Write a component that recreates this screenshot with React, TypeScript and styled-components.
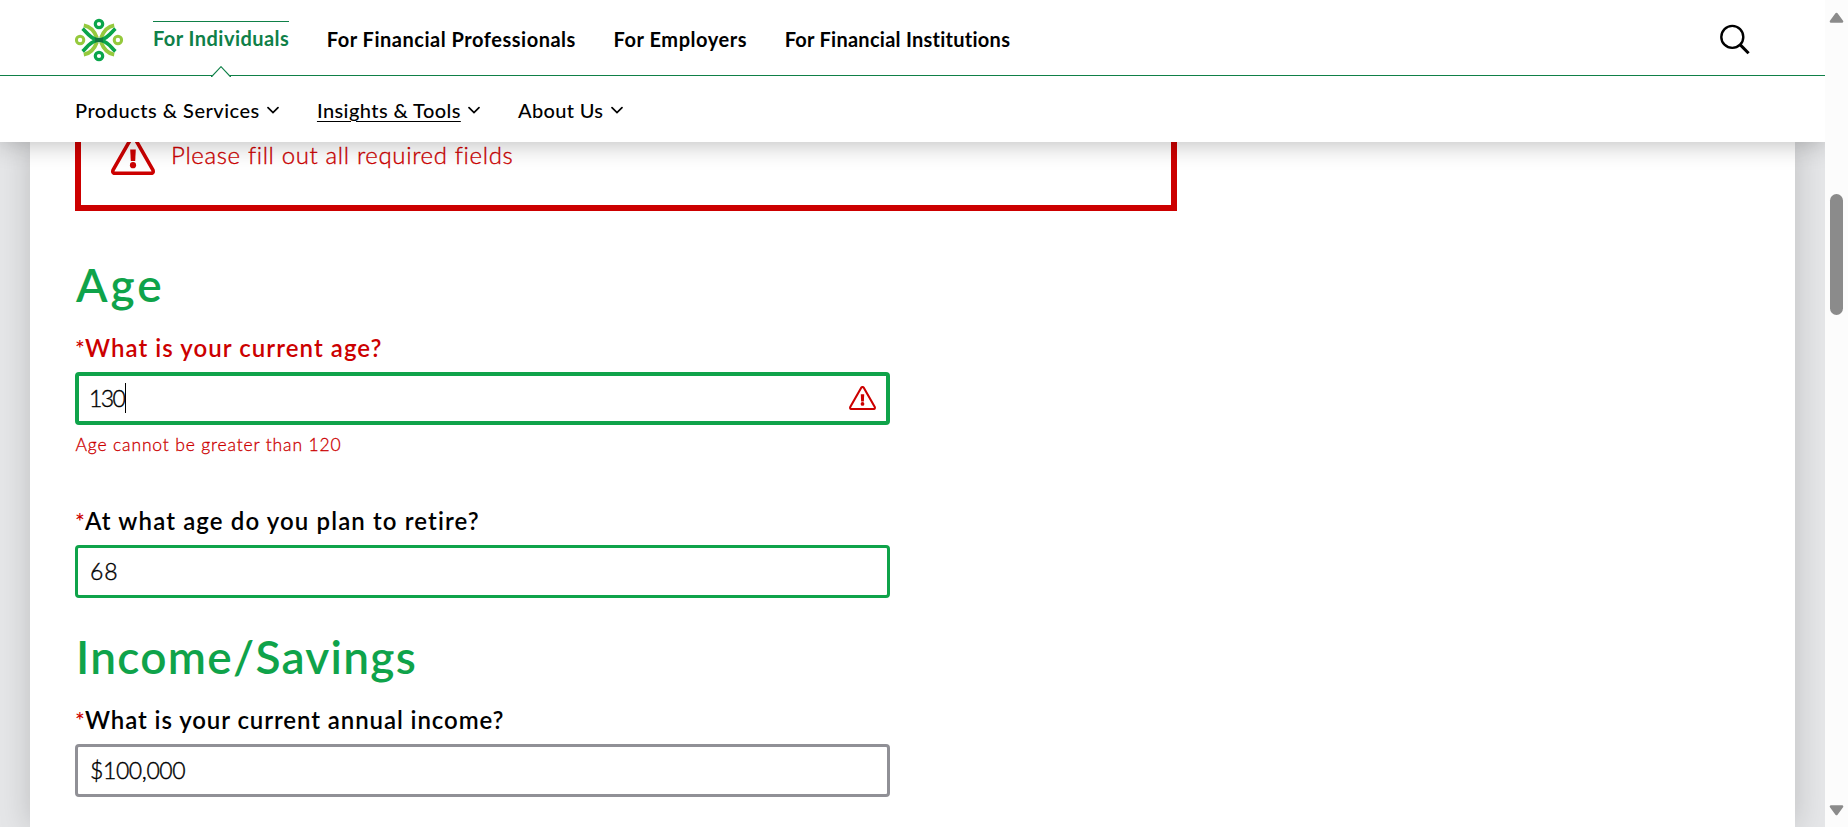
import React from "react";
import styled, { createGlobalStyle, css } from "styled-components";

const RED = "#cc0000";
const GREEN = "#0fa34a";
const DEEP_GREEN = "#0f8048";

const GlobalStyle = createGlobalStyle`
  * { box-sizing: border-box; }
  body {
    margin: 0;
    background: #fff;
    color: #000;
    font-family: Lato, "Open Sans", sans-serif;
  }
`;

const Page = styled.div`
  display: flex;
  height: 827px;
  overflow: hidden;
`;

const Viewport = styled.div`
  flex: 1;
  min-width: 0;
  display: flex;
  flex-direction: column;
  overflow: hidden;
`;

/* ---------- header ---------- */

const Header = styled.header`
  position: relative;
  z-index: 2;
  flex: none;
  height: 142px;
  background: #fff;
  box-shadow: 0 0 25px rgba(0, 0, 0, 0.3);
`;

const TopBar = styled.div`
  display: flex;
  align-items: flex-start;
  height: 76px;
  padding: 18px 74px 0 75px;
  border-bottom: 1px solid ${DEEP_GREEN};
`;

const Logo = styled.svg`
  display: block;
  width: 48px;
  height: 44px;
  margin-right: 30px;
`;

const TopNav = styled.nav`
  display: flex;
  align-items: flex-start;
  gap: 37.5px;
  flex: 1;
  padding-top: 8px;
`;

const TopLink = styled.a<{ $active?: boolean; $spacing: number }>`
  position: relative;
  font-size: 20px;
  line-height: 26px;
  font-weight: 700;
  letter-spacing: ${(p) => p.$spacing}px;
  white-space: nowrap;
  ${(p) =>
    p.$active &&
    css`
      margin-top: -5px;
      padding-top: 3px;
      border-top: 1px solid ${DEEP_GREEN};
      color: ${DEEP_GREEN};
    `}
`;

const Notch = styled.svg`
  position: absolute;
  left: 50%;
  top: 44px;
  margin-left: -10px;
  width: 20px;
  height: 11px;
`;

const SearchIcon = styled.svg`
  display: block;
  width: 32px;
  height: 32px;
  margin-top: 6px;
`;

const SubNav = styled.nav`
  display: flex;
  gap: 37.7px;
  padding: 21px 75px 0;
`;

const SubLink = styled.a`
  display: flex;
  align-items: center;
  gap: 7.5px;
  line-height: 26px;
  white-space: nowrap;
`;

const SubText = styled.span<{ $underlined?: boolean; $spacing: number }>`
  font-size: 20px;
  font-weight: 500;
  letter-spacing: ${(p) => p.$spacing}px;
  ${(p) =>
    p.$underlined &&
    css`
      text-decoration: underline;
      text-decoration-thickness: 1px;
      text-underline-offset: 3px;
    `}
`;

/* ---------- content ---------- */

const Content = styled.main`
  flex: 1;
  min-height: 0;
  display: flex;
  padding: 0 30px;
  overflow: hidden;
  background: #e5e6e8;
`;

const Panel = styled.section`
  flex: 1;
  padding: 0 45px;
  background: #fff;
  box-shadow: 0 0 30px rgba(0, 0, 0, 0.18);
`;

const Alert = styled.div`
  display: flex;
  align-items: flex-end;
  gap: 16px;
  width: 1102px;
  height: 109px;
  margin-top: -40px;
  padding: 0 30px 30px;
  border: 6px solid ${RED};
`;

const AlertText = styled.p`
  margin: 0 0 7px;
  color: ${RED};
  font-size: 24px;
  line-height: 26px;
  font-weight: 300;
  letter-spacing: 0.64px;
  -webkit-text-stroke: 0.35px ${RED};
`;

const Heading = styled.h2<{ $top: number; $spacing: number }>`
  margin: ${(p) => p.$top}px 0 22px 1px;
  color: ${GREEN};
  font-size: 46px;
  line-height: 52px;
  font-weight: 600;
  letter-spacing: ${(p) => p.$spacing}px;
`;

const Field = styled.div<{ $top?: number }>`
  width: 815px;
  margin-top: ${(p) => p.$top ?? 0}px;
`;

const Label = styled.label<{ $error?: boolean; $spacing: number }>`
  display: flex;
  margin-bottom: 9px;
  color: ${(p) => (p.$error ? RED : "#000")};
  font-size: 24px;
  line-height: 30px;
  font-weight: 600;
  letter-spacing: ${(p) => p.$spacing}px;
`;

const Star = styled.span`
  width: 10px;
  color: ${RED};
  font-size: 23px;
  font-weight: 500;
  letter-spacing: 0;
`;

const InputBox = styled.div<{ $border: string; $width: number; $left: number }>`
  display: flex;
  align-items: center;
  height: 53px;
  padding: 0 10px 1px ${(p) => p.$left}px;
  border: ${(p) => p.$width}px solid ${(p) => p.$border};
  border-radius: 4px;
`;

const Value = styled.span<{ $spacing: number }>`
  font-size: 23px;
  line-height: 30px;
  font-weight: 300;
  letter-spacing: ${(p) => p.$spacing}px;
  -webkit-text-stroke: 0.4px #000;
`;

const Caret = styled.span`
  width: 1px;
  height: 30px;
  margin: 0 auto 0 1px;
  background: #000;
`;

const ErrorText = styled.p`
  margin: 8px 0 0 0.5px;
  color: ${RED};
  font-size: 17.5px;
  line-height: 24px;
  font-weight: 300;
  letter-spacing: 0.84px;
  -webkit-text-stroke: 0.3px ${RED};
`;

/* ---------- scrollbar ---------- */

const Scrollbar = styled.aside`
  flex: none;
  display: flex;
  flex-direction: column;
  align-items: center;
  width: 23px;
  padding: 12px 0 11px;
  background: #fcfcfc;
`;

const Thumb = styled.div`
  width: 13px;
  height: 121px;
  margin: 171px 0 auto;
  border-radius: 7px;
  background: #8b8b8b;
`;

const Arrow = styled.svg<{ $down?: boolean }>`
  display: block;
  width: 15px;
  height: 11px;
  transform: ${(p) => (p.$down ? "rotate(180deg)" : "none")};
`;

const ScrollArrow = ({ down }: { down?: boolean }) => (
  <Arrow $down={down} viewBox="0 0 15 11">
    <path d="M7.5 2 13 9.5H2Z" fill="#8b8b8b" stroke="#8b8b8b" strokeWidth="2.6" strokeLinejoin="round" />
  </Arrow>
);

const Chevron = () => (
  <svg width="12" height="8" viewBox="0 0 12 8" fill="none">
    <path d="M1 1.6 6 6.6 11 1.6" stroke="#000" strokeWidth="1.7" strokeLinecap="round" />
  </svg>
);

const Warning = ({ width, height, stroke }: { width: number; height: number; stroke: number }) => (
  <svg width={width} height={height} viewBox="0 0 44 39" fill="none">
    <path
      d="M19.9 2.8Q22 .4 24.1 2.8L42 34.2Q42.8 37.2 40.3 37.4H3.7Q1.2 37.2 2 34.2Z"
      stroke={RED}
      strokeWidth={stroke}
      strokeLinejoin="round"
    />
    <path d="M19.2 13.5h5.6l-.6 11.5h-4.4Z" fill={RED} />
    <circle cx="22" cy="29.2" r="3.1" fill={RED} />
  </svg>
);

const BrandLogo = () => (
  <Logo viewBox="0 0 48 44" fill="none">
    <g stroke="#95c93d" strokeWidth="3.8">
      <path d="M8.8 7.4C15 8.4 19.6 13.5 22 20" />
      <path d="M39.2 7.4C33 8.4 28.4 13.5 26 20" />
      <path d="M8.8 36.6C15 35.6 19.6 30.5 22 24" />
      <path d="M39.2 36.6C33 35.6 28.4 30.5 26 24" />
      <circle cx="5.1" cy="22" r="3.7" strokeWidth="3" />
      <circle cx="42.9" cy="22" r="3.7" strokeWidth="3" />
    </g>
    <g stroke="#0ba54b" strokeWidth="3.7">
      <circle cx="24" cy="6" r="3.7" strokeWidth="3.2" />
      <circle cx="24" cy="38" r="3.7" strokeWidth="3.2" />
      <path d="M7.6 10.6C11.5 14 14.5 19.8 21 21.3" />
      <path d="M40.4 10.6C36.5 14 33.5 19.8 27 21.3" />
      <path d="M7.6 33.4C11.5 30 14.5 24.2 21 22.7" />
      <path d="M40.4 33.4C36.5 30 33.5 24.2 27 22.7" />
    </g>
    <path d="M19.5 19.7H28.5L27.7 22L28.5 24.3H19.5L20.3 22Z" fill="#12783f" />
  </Logo>
);

export default function App() {
  return (
    <Page>
      <GlobalStyle />
      <Viewport>
        <Header>
          <TopBar>
            <BrandLogo />
            <TopNav>
              <TopLink $active $spacing={0.45}>
                For Individuals
                <Notch viewBox="0 0 20 11">
                  <path d="M.8 10 10 .4 19.2 10V11H.8Z" fill="#fff" />
                  <path d="M0 10.5H.8L10 .7 19.2 10.5H20" fill="none" stroke={DEEP_GREEN} strokeWidth="1.15" />
                </Notch>
              </TopLink>
              <TopLink $spacing={0.52}>For Financial Professionals</TopLink>
              <TopLink $spacing={0.56}>For Employers</TopLink>
              <TopLink $spacing={0.26}>For Financial Institutions</TopLink>
            </TopNav>
            <SearchIcon viewBox="0 0 32 32" fill="none" stroke="#000">
              <circle cx="13.3" cy="12.9" r="11" strokeWidth="2.4" />
              <path d="M21.3 20.9 29.6 29.2" strokeWidth="3" />
            </SearchIcon>
          </TopBar>
          <SubNav>
            <SubLink>
              <SubText $spacing={0.5}>Products &amp; Services</SubText>
              <Chevron />
            </SubLink>
            <SubLink>
              <SubText $underlined $spacing={0.42}>Insights &amp; Tools</SubText>
              <Chevron />
            </SubLink>
            <SubLink>
              <SubText $spacing={0.34}>About Us</SubText>
              <Chevron />
            </SubLink>
          </SubNav>
        </Header>
        <Content>
          <Panel>
            <Alert>
              <Warning width={44} height={39} stroke={3.6} />
              <AlertText>Please fill out all required fields</AlertText>
            </Alert>

            <Heading $top={48} $spacing={3}>Age</Heading>
            <Field>
              <Label $error $spacing={1.06}>
                <Star>*</Star>What is your current age?
              </Label>
              <InputBox $border={GREEN} $width={4} $left={10}>
                <Value $spacing={-1.6}>130</Value>
                <Caret />
                <Warning width={27} height={24} stroke={3.4} />
              </InputBox>
              <ErrorText>Age cannot be greater than 120</ErrorText>
            </Field>
            <Field $top={49}>
              <Label $spacing={1.12}>
                <Star>*</Star>At what age do you plan to retire?
              </Label>
              <InputBox $border={GREEN} $width={3} $left={12}>
                <Value $spacing={1}>68</Value>
              </InputBox>
            </Field>

            <Heading $top={33} $spacing={1.28}>Income/Savings</Heading>
            <Field>
              <Label $spacing={0.92}>
                <Star>*</Star>What is your current annual income?
              </Label>
              <InputBox $border="#909096" $width={3} $left={12}>
                <Value $spacing={-0.4}>$100,000</Value>
              </InputBox>
            </Field>
          </Panel>
        </Content>
      </Viewport>
      <Scrollbar>
        <ScrollArrow />
        <Thumb />
        <ScrollArrow down />
      </Scrollbar>
    </Page>
  );
}
